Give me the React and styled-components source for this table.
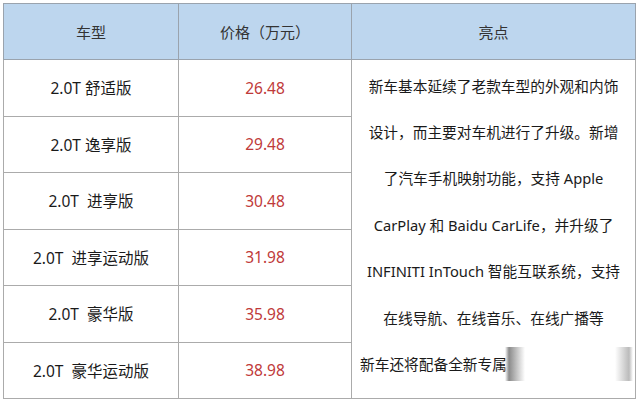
import styled, { createGlobalStyle } from "styled-components";

const GlobalStyle = createGlobalStyle`
  html, body {
    margin: 0;
    padding: 0;
    background: #ffffff;
  }
  body {
    font-family: "Noto Sans", "Noto Sans CJK SC", sans-serif;
  }
`;

const rows = [
  { model: "2.0T 舒适版", price: "26.48" },
  { model: "2.0T 逸享版", price: "29.48" },
  { model: "2.0T  进享版", price: "30.48" },
  { model: "2.0T  进享运动版", price: "31.98" },
  { model: "2.0T  豪华版", price: "35.98" },
  { model: "2.0T  豪华运动版", price: "38.98" },
];

const highlights = [
  "新车基本延续了老款车型的外观和内饰",
  "设计，而主要对车机进行了升级。新增",
  "了汽车手机映射功能，支持 Apple",
  "CarPlay 和 Baidu CarLife，并升级了",
  "INFINITI InTouch 智能互联系统，支持",
  "在线导航、在线音乐、在线广播等",
];

export default function App() {
  return (
    <>
      <GlobalStyle />
      <Page>
        <Table>
          <colgroup>
            <col style={{ width: 175 }} />
            <col style={{ width: 173 }} />
            <col />
          </colgroup>
          <thead>
            <tr>
              <Head>车型</Head>
              <Head>价格（万元）</Head>
              <Head>亮点</Head>
            </tr>
          </thead>
          <tbody>
            {rows.map((row, index) => (
              <tr key={String(index)}>
                <Cell>{row.model}</Cell>
                <Cell red>{row.price}</Cell>
                {index === 0 && (
                  <Notes rowSpan={rows.length}>
                    <NotesInner>
                      {highlights.map((line, i) => (
                        <Line key={String(i)}>{line}</Line>
                      ))}
                      <Line left>
                        <Cut>新车还将配备全新专属</Cut>
                      </Line>
                    </NotesInner>
                  </Notes>
                )}
              </tr>
            ))}
          </tbody>
        </Table>
      </Page>
    </>
  );
}

const Page = styled.div`
  width: 640px;
  height: 401px;
  padding: 3px 0 0 3px;
  box-sizing: border-box;
  overflow: hidden;
`;

const Table = styled.table`
  width: 633px;
  border-collapse: collapse;
  table-layout: fixed;
`;

const Head = styled.th`
  height: 55px;
  padding: 0;
  background: #bdd6ee;
  border: 1px solid #9aa3ad;
  color: #333333;
  font-size: 15px;
  font-weight: 400;
  text-align: center;
`;

const Cell = styled.td`
  height: 55.3px;
  padding: 0;
  border: 1px solid #ababab;
  color: ${(p) => (p.red ? "#bf3a3a" : "#1a1a1a")};
  font-size: 15.5px;
  text-align: center;
  white-space: pre;
`;

const Notes = styled.td`
  padding: 0;
  border: 1px solid #ababab;
  vertical-align: top;
`;

const NotesInner = styled.div`
  padding-top: 2px;
  height: 336px;
  overflow: hidden;
`;

const Line = styled.div`
  display: flex;
  align-items: center;
  justify-content: ${(p) => (p.left ? "flex-start" : "center")};
  padding-left: ${(p) => (p.left ? "8px" : "0")};
  height: 46.4px;
  font-size: 14.7px;
  color: #1a1a1a;
  white-space: nowrap;
`;

/* last line fades out into a blurred grey smudge, as in the photographed page */
const Cut = styled.span`
  position: relative;
  display: inline-block;
  width: 151px;
  overflow: visible;
  line-height: 22px;

  &::after {
    content: "";
    position: absolute;
    left: 145px;
    top: -6px;
    width: 128px;
    height: 34px;
    background: linear-gradient(
      to right,
      rgba(255, 255, 255, 0.4) 0px,
      rgba(110, 110, 110, 0.8) 4px,
      rgba(255, 255, 255, 1) 20px,
      #ffffff 104px,
      rgba(255, 255, 255, 0.9) 110px,
      rgba(170, 170, 170, 0.8) 124px,
      rgba(255, 255, 255, 0.9) 128px
    );
  }
`;
